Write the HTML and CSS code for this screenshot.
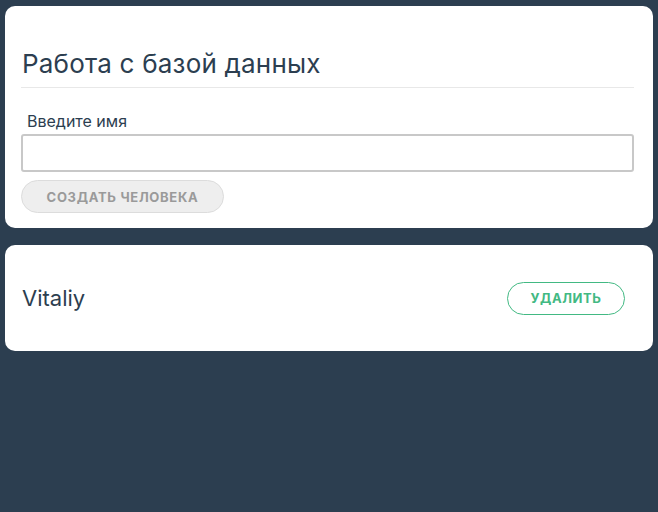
FILE: index.html
```html
<!DOCTYPE html>
<html lang="ru">
<head>
<meta charset="utf-8">
<link rel="stylesheet" href="styles.css">
</head>
<body>
<div class="app">
  <section class="card form-card">
    <h2 class="title">Работа с базой данных</h2>
    <label class="label" for="name">Введите имя</label>
    <input class="input" id="name" type="text">
    <button class="btn-create" type="button">Создать человека</button>
  </section>
  <section class="card person-card">
    <span class="person-name">Vitaliy</span>
    <button class="btn-delete" type="button">Удалить</button>
  </section>
</div>
</body>
</html>
```
FILE: styles.css
```css
html, body {
  margin: 0;
  padding: 0;
  background: #2c3e50;
  height: 100%;
}
body {
  font-family: Inter, "Noto Sans", sans-serif;
  color: #2c3e50;
}
.app {
  display: flex;
  flex-direction: column;
  gap: 17px;
  padding: 6px 5px;
}
.card {
  background: #fff;
  border-radius: 10px;
  box-sizing: border-box;
}
.form-card {
  display: flex;
  flex-direction: column;
  align-items: flex-start;
  padding: 42px 19px 15px 16px;
  height: 222px;
}
.title {
  margin: 0;
  align-self: stretch;
  font-size: 26px;
  font-weight: 400;
  line-height: 32px;
  letter-spacing: 0.2px;
  border-bottom: 1px solid #e8e8e8;
  padding: 0 0 7px 1px;
}
.label {
  margin: 23px 0 0 6px;
  font-size: 16px;
  line-height: 20px;
  padding-bottom: 1px;
}
.input {
  margin: 2px 0 0 0;
  align-self: stretch;
  height: 38px;
  box-sizing: border-box;
  border: 2px solid #c8c8c8;
  border-radius: 3px;
  font-size: 15px;
  padding: 0 8px;
  outline: none;
}
.btn-create {
  margin: 8px 0 0 0;
  width: 203px;
  height: 33px;
  border-radius: 17px;
  border: 1px solid #dcdcdc;
  background: #eeeeee;
  color: #9a9a9a;
  font-family: Inter, "Noto Sans", sans-serif;
  font-weight: 700;
  font-size: 13px;
  letter-spacing: 0.7px;
  text-transform: uppercase;
}
.person-card {
  height: 106px;
  display: flex;
  align-items: center;
  justify-content: space-between;
  padding: 0 28px 0 17px;
}
.person-name {
  font-size: 22px;
}
.btn-delete {
  width: 118px;
  height: 33px;
  border-radius: 17px;
  border: 1px solid #42b983;
  background: #fff;
  color: #42b983;
  font-family: Inter, "Noto Sans", sans-serif;
  font-weight: 700;
  font-size: 13px;
  letter-spacing: 0.6px;
  text-transform: uppercase;
}
```
